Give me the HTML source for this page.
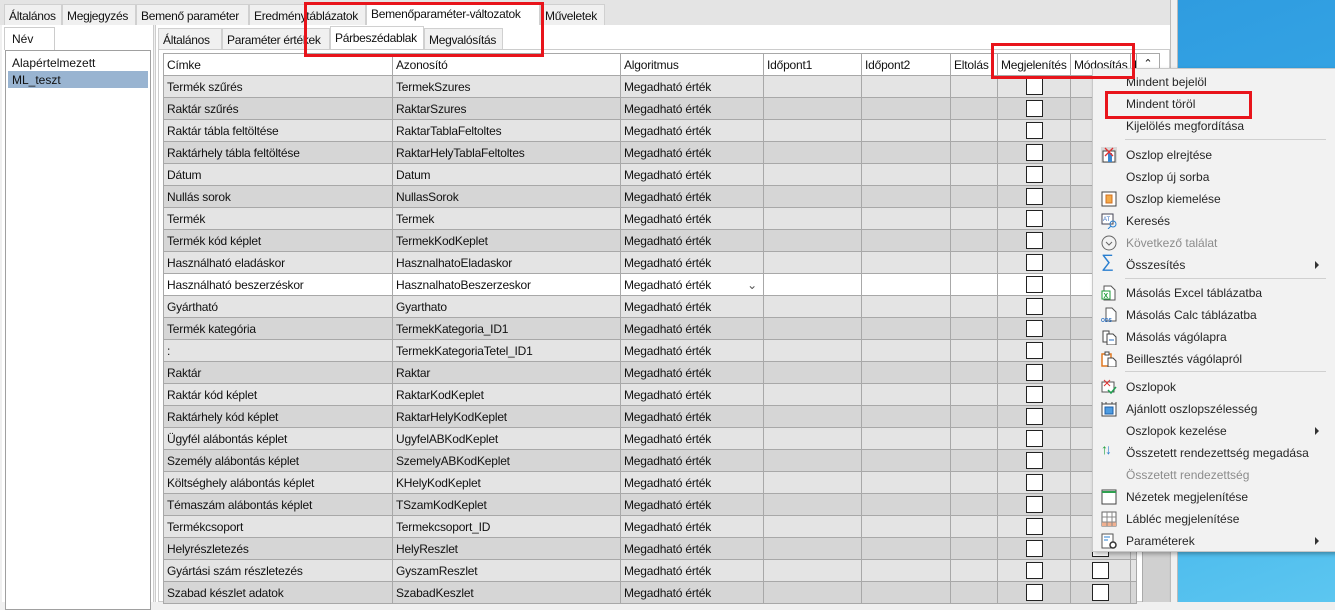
<!DOCTYPE html>
<html><head><meta charset="utf-8"><style>
*{box-sizing:border-box;margin:0;padding:0}
body{width:1335px;height:602px;overflow:hidden;position:relative;background:#f0f0f0;font-family:"Liberation Sans",sans-serif;font-size:12px;color:#111}
.a{position:absolute}
.desk{left:1178px;top:0;width:157px;height:602px;background:linear-gradient(160deg,#2f9ce0,#3cb0ea 60%,#5cc6f0)}
.tab,.stab{position:absolute;top:4px;height:21px;border:1px solid #d0d0d0;border-bottom:none;background:#f0f0f0;padding:4px 0 0 4px;white-space:nowrap;font-size:12px;letter-spacing:-0.3px;overflow:hidden}
.stab{top:28px}
table{position:absolute;left:163px;top:53px;border-collapse:collapse;table-layout:fixed;width:973px}
td{height:22px;border:1px solid #a8a8a8;padding:0 0 0 3px;white-space:nowrap;overflow:hidden;font-size:12px;letter-spacing:-0.2px}
tr.h td{background:#fff}
tr.l td{background:#e4e4e4}
tr.d td{background:#d6d6d6}
tr.w td{background:#fff}
.cb{display:inline-block;width:17px;height:17px;border:1px solid #222;background:#fff;vertical-align:middle}
td.c{text-align:center;padding:0}
.menu{left:1092px;top:68px;width:245px;height:484px;background:#f2f2f2;border:1px solid #c8c8c8;box-shadow:2px 2px 4px rgba(0,0,0,.3)}
.mi{position:absolute;left:33px;font-size:12px;color:#262626;height:22px;line-height:22px;white-space:nowrap}
.g{color:#8c8c8c}
.sep{position:absolute;left:32px;width:201px;height:1px;background:#d0d0d0}
.arr{position:absolute;left:222px;width:0;height:0;border-left:4px solid #333;border-top:4px solid transparent;border-bottom:4px solid transparent}
.ic{position:absolute;left:8px;width:16px;height:16px}
.red{position:absolute;border:3px solid #e8141b}
</style></head><body>
<div class="a desk"></div>
<div class="a" style="left:0;top:0;width:1178px;height:25px;background:#e4e4e4"></div>
<div class="tab" style="left:4px;width:58px">Általános</div>
<div class="tab" style="left:62px;width:74px">Megjegyzés</div>
<div class="tab" style="left:136px;width:113px">Bemenő paraméter</div>
<div class="tab" style="left:249px;width:117px">Eredménytáblázatok</div>
<div class="tab" style="left:366px;top:2px;height:24px;width:174px;background:#fff">Bemenőparaméter-változatok</div>
<div class="tab" style="left:540px;width:65px">Műveletek</div>
<!-- left panel -->
<div class="a" style="left:2px;top:25px;width:152px;height:577px;background:#fff;border-right:1px solid #ccc"></div>
<div class="a" style="left:4px;top:27px;width:51px;height:23px;background:#fff;border:1px solid #ccc;border-bottom:none;padding:4px 0 0 7px;font-size:12px">Név</div>
<div class="a" style="left:5px;top:50px;width:146px;height:560px;border:1px solid #a0a0a0;background:#fff"></div>
<div class="a" style="left:12px;top:56px;font-size:12px">Alapértelmezett</div>
<div class="a" style="left:8px;top:71px;width:140px;height:17px;background:#99b4d1"></div>
<div class="a" style="left:12px;top:73px;font-size:12px">ML_teszt</div>
<!-- right panel -->
<div class="a" style="left:155px;top:25px;width:1015px;height:577px;background:#fff;border-left:1px solid #ccc"></div>
<div class="stab" style="left:158px;width:64px">Általános</div>
<div class="stab" style="left:222px;width:108px">Paraméter értékek</div>
<div class="stab" style="left:330px;top:26px;height:24px;width:94px;background:#fff">Párbeszédablak</div>
<div class="stab" style="left:424px;width:79px">Megvalósítás</div>
<div class="a" style="left:158px;top:49px;width:1012px;height:553px;border:1px solid #ccc;background:#fff"></div>
<div class="a" style="left:1142px;top:75px;width:27px;height:527px;background:#d0d0d0;border-left:1px solid #aaa"></div>
<div class="a" style="left:1170px;top:0;width:8px;height:602px;background:#f0f0f0;border-left:1px solid #bbb;border-right:1px solid #bbb"></div>
<table>
<colgroup><col style="width:229px"><col style="width:228px"><col style="width:143px"><col style="width:98px"><col style="width:89px"><col style="width:47px"><col style="width:73px"><col style="width:60px"><col style="width:6px"></colgroup>
<tr class="h"><td>Címke</td><td>Azonosító</td><td>Algoritmus</td><td>Időpont1</td><td>Időpont2</td><td>Eltolás</td><td>Megjelenítés</td><td>Módosítás</td><td>K</td></tr>
<tr class="l"><td>Termék szűrés</td><td>TermekSzures</td><td>Megadható érték</td><td></td><td></td><td></td><td class="c"><span class="cb"></span></td><td class="c"><span class="cb"></span></td><td></td></tr>
<tr class="d"><td>Raktár szűrés</td><td>RaktarSzures</td><td>Megadható érték</td><td></td><td></td><td></td><td class="c"><span class="cb"></span></td><td class="c"><span class="cb"></span></td><td></td></tr>
<tr class="l"><td>Raktár tábla feltöltése</td><td>RaktarTablaFeltoltes</td><td>Megadható érték</td><td></td><td></td><td></td><td class="c"><span class="cb"></span></td><td class="c"><span class="cb"></span></td><td></td></tr>
<tr class="d"><td>Raktárhely tábla feltöltése</td><td>RaktarHelyTablaFeltoltes</td><td>Megadható érték</td><td></td><td></td><td></td><td class="c"><span class="cb"></span></td><td class="c"><span class="cb"></span></td><td></td></tr>
<tr class="l"><td>Dátum</td><td>Datum</td><td>Megadható érték</td><td></td><td></td><td></td><td class="c"><span class="cb"></span></td><td class="c"><span class="cb"></span></td><td></td></tr>
<tr class="d"><td>Nullás sorok</td><td>NullasSorok</td><td>Megadható érték</td><td></td><td></td><td></td><td class="c"><span class="cb"></span></td><td class="c"><span class="cb"></span></td><td></td></tr>
<tr class="l"><td>Termék</td><td>Termek</td><td>Megadható érték</td><td></td><td></td><td></td><td class="c"><span class="cb"></span></td><td class="c"><span class="cb"></span></td><td></td></tr>
<tr class="d"><td>Termék kód képlet</td><td>TermekKodKeplet</td><td>Megadható érték</td><td></td><td></td><td></td><td class="c"><span class="cb"></span></td><td class="c"><span class="cb"></span></td><td></td></tr>
<tr class="l"><td>Használható eladáskor</td><td>HasznalhatoEladaskor</td><td>Megadható érték</td><td></td><td></td><td></td><td class="c"><span class="cb"></span></td><td class="c"><span class="cb"></span></td><td></td></tr>
<tr class="w"><td>Használható beszerzéskor</td><td>HasznalhatoBeszerzeskor</td><td>Megadható érték<span style="float:right;margin-right:6px;color:#555">&#8964;</span></td><td></td><td></td><td></td><td class="c"><span class="cb"></span></td><td class="c"><span class="cb"></span></td><td></td></tr>
<tr class="l"><td>Gyártható</td><td>Gyarthato</td><td>Megadható érték</td><td></td><td></td><td></td><td class="c"><span class="cb"></span></td><td class="c"><span class="cb"></span></td><td></td></tr>
<tr class="d"><td>Termék kategória</td><td>TermekKategoria_ID1</td><td>Megadható érték</td><td></td><td></td><td></td><td class="c"><span class="cb"></span></td><td class="c"><span class="cb"></span></td><td></td></tr>
<tr class="l"><td>:</td><td>TermekKategoriaTetel_ID1</td><td>Megadható érték</td><td></td><td></td><td></td><td class="c"><span class="cb"></span></td><td class="c"><span class="cb"></span></td><td></td></tr>
<tr class="d"><td>Raktár</td><td>Raktar</td><td>Megadható érték</td><td></td><td></td><td></td><td class="c"><span class="cb"></span></td><td class="c"><span class="cb"></span></td><td></td></tr>
<tr class="l"><td>Raktár kód képlet</td><td>RaktarKodKeplet</td><td>Megadható érték</td><td></td><td></td><td></td><td class="c"><span class="cb"></span></td><td class="c"><span class="cb"></span></td><td></td></tr>
<tr class="d"><td>Raktárhely kód képlet</td><td>RaktarHelyKodKeplet</td><td>Megadható érték</td><td></td><td></td><td></td><td class="c"><span class="cb"></span></td><td class="c"><span class="cb"></span></td><td></td></tr>
<tr class="l"><td>Ügyfél alábontás képlet</td><td>UgyfelABKodKeplet</td><td>Megadható érték</td><td></td><td></td><td></td><td class="c"><span class="cb"></span></td><td class="c"><span class="cb"></span></td><td></td></tr>
<tr class="d"><td>Személy alábontás képlet</td><td>SzemelyABKodKeplet</td><td>Megadható érték</td><td></td><td></td><td></td><td class="c"><span class="cb"></span></td><td class="c"><span class="cb"></span></td><td></td></tr>
<tr class="l"><td>Költséghely alábontás képlet</td><td>KHelyKodKeplet</td><td>Megadható érték</td><td></td><td></td><td></td><td class="c"><span class="cb"></span></td><td class="c"><span class="cb"></span></td><td></td></tr>
<tr class="d"><td>Témaszám alábontás képlet</td><td>TSzamKodKeplet</td><td>Megadható érték</td><td></td><td></td><td></td><td class="c"><span class="cb"></span></td><td class="c"><span class="cb"></span></td><td></td></tr>
<tr class="l"><td>Termékcsoport</td><td>Termekcsoport_ID</td><td>Megadható érték</td><td></td><td></td><td></td><td class="c"><span class="cb"></span></td><td class="c"><span class="cb"></span></td><td></td></tr>
<tr class="d"><td>Helyrészletezés</td><td>HelyReszlet</td><td>Megadható érték</td><td></td><td></td><td></td><td class="c"><span class="cb"></span></td><td class="c"><span class="cb"></span></td><td></td></tr>
<tr class="l"><td>Gyártási szám részletezés</td><td>GyszamReszlet</td><td>Megadható érték</td><td></td><td></td><td></td><td class="c"><span class="cb"></span></td><td class="c"><span class="cb"></span></td><td></td></tr>
<tr class="d"><td>Szabad készlet adatok</td><td>SzabadKeszlet</td><td>Megadható érték</td><td></td><td></td><td></td><td class="c"><span class="cb"></span></td><td class="c"><span class="cb"></span></td><td></td></tr>
</table>
<div class="a" style="left:1136px;top:53px;width:24px;height:22px;background:#fff;border:1px solid #a8a8a8;text-align:center;font-size:11px;line-height:20px">&#8963;</div>
<!-- context menu -->
<div class="a menu">
<div class="mi" style="top:2px">Mindent bejelöl</div>
<div class="mi" style="top:24px">Mindent töröl</div>
<div class="mi" style="top:46px">Kijelölés megfordítása</div>
<div class="sep" style="top:70px"></div>
<svg class="ic" style="top:78px" viewBox="0 0 16 16"><rect x="0" y="0" width="16" height="16" fill="#d8d8d8"/><rect x="2" y="4" width="12" height="11" fill="#fff" stroke="#444"/><rect x="7" y="6" width="4" height="9" fill="#3a86d0"/><path d="M4 1l8 8M12 1l-8 8" stroke="#e03030" stroke-width="1.3"/></svg>
<div class="mi" style="top:75px">Oszlop elrejtése</div>
<div class="mi" style="top:97px">Oszlop új sorba</div>
<svg class="ic" style="top:122px" viewBox="0 0 16 16"><rect x="1" y="1" width="14" height="14" fill="#fff" stroke="#444"/><rect x="5" y="4" width="6" height="8" fill="#f3a948" stroke="#d07020"/></svg>
<div class="mi" style="top:119px">Oszlop kiemelése</div>
<svg class="ic" style="top:144px" viewBox="0 0 16 16"><rect x="1" y="1" width="11" height="10" fill="#fff" stroke="#445"/><text x="2" y="8" font-size="6" fill="#3a6fc0" font-family="Liberation Sans">AT</text><circle cx="12" cy="11" r="3" fill="none" stroke="#2a80d0"/><path d="M10 13l-3 3" stroke="#2a80d0"/></svg>
<div class="mi" style="top:141px">Keresés</div>
<svg class="ic" style="top:166px" viewBox="0 0 16 16"><circle cx="8" cy="8" r="7" fill="none" stroke="#666"/><path d="M5 7l3 3 3-3" fill="none" stroke="#666"/></svg>
<div class="mi g" style="top:163px">Következő találat</div>
<div class="ic" style="top:184px;font-size:18px;color:#2a7fd0;line-height:16px">&sum;</div>
<div class="mi" style="top:185px">Összesítés</div><div class="arr" style="top:192px"></div>
<div class="sep" style="top:209px"></div>
<svg class="ic" style="top:216px" viewBox="0 0 16 16"><path d="M3 1h7l4 4v10H3z" fill="#fff" stroke="#555"/><rect x="1" y="6" width="8" height="8" fill="#fff" stroke="#1e9e3a"/><text x="2.5" y="13" font-size="7" fill="#1e9e3a" font-family="Liberation Sans" font-weight="bold">X</text></svg>
<div class="mi" style="top:213px">Másolás Excel táblázatba</div>
<svg class="ic" style="top:238px" viewBox="0 0 16 16"><path d="M5 1h6l4 4v9H5z" fill="#fff" stroke="#555"/><text x="0" y="15" font-size="5" fill="#2a6fc0" font-family="Liberation Sans" font-weight="bold">ODS</text></svg>
<div class="mi" style="top:235px">Másolás Calc táblázatba</div>
<svg class="ic" style="top:260px" viewBox="0 0 16 16"><path d="M2 2h6v11H2z" fill="#fff" stroke="#444"/><path d="M6 5h6l3 3v8H6z" fill="#fff" stroke="#444"/><path d="M8 11h5" stroke="#2a6fc0"/></svg>
<div class="mi" style="top:257px">Másolás vágólapra</div>
<svg class="ic" style="top:282px" viewBox="0 0 16 16"><path d="M1 3h9v12H1z" fill="#fff" stroke="#e07820" stroke-width="1.5"/><rect x="4" y="1" width="4" height="3" fill="#fff" stroke="#444"/><path d="M7 7h5l3 3v6H7z" fill="#fff" stroke="#444"/></svg>
<div class="mi" style="top:279px">Beillesztés vágólapról</div>
<div class="sep" style="top:302px"></div>
<svg class="ic" style="top:310px" viewBox="0 0 16 16"><rect x="1" y="3" width="12" height="10" fill="#fff" stroke="#555"/><path d="M3 1l6 6M9 1l-6 6" stroke="#e03030"/><path d="M7 11l3 3 5-6" fill="none" stroke="#20a050" stroke-width="1.5"/></svg>
<div class="mi" style="top:307px">Oszlopok</div>
<svg class="ic" style="top:332px" viewBox="0 0 16 16"><rect x="1" y="3" width="14" height="12" fill="#fff" stroke="#444"/><rect x="4" y="6" width="8" height="7" fill="#4d9be0" stroke="#1d5fa8"/><path d="M1 1v2M15 1v2M5 1v2M11 1v2" stroke="#444"/></svg>
<div class="mi" style="top:329px">Ajánlott oszlopszélesség</div>
<div class="mi" style="top:351px">Oszlopok kezelése</div><div class="arr" style="top:358px"></div>
<div class="ic" style="top:372px;font-size:14px;line-height:16px"><span style="color:#20a040">&#8593;</span><span style="color:#2a7fd0;margin-left:-3px">&#8595;</span></div>
<div class="mi" style="top:373px">Összetett rendezettség megadása</div>
<div class="mi g" style="top:395px">Összetett rendezettség</div>
<svg class="ic" style="top:420px" viewBox="0 0 16 16"><rect x="1" y="1" width="14" height="14" fill="#fff" stroke="#444"/><path d="M1 3h14" stroke="#2fa050" stroke-width="2"/></svg>
<div class="mi" style="top:417px">Nézetek megjelenítése</div>
<svg class="ic" style="top:442px" viewBox="0 0 16 16"><rect x="1" y="1" width="14" height="14" fill="#fff" stroke="#666"/><rect x="1" y="11" width="14" height="4" fill="#f0b090"/><path d="M1 6h14M1 11h14M6 1v14M11 1v14" stroke="#888"/></svg>
<div class="mi" style="top:439px">Lábléc megjelenítése</div>
<svg class="ic" style="top:464px" viewBox="0 0 16 16"><rect x="1" y="1" width="11" height="14" fill="#fff" stroke="#555"/><path d="M3 4h6M3 7h4" stroke="#2a7fd0"/><circle cx="12" cy="12" r="3" fill="#fff" stroke="#333" stroke-width="1.5"/></svg>
<div class="mi" style="top:461px">Paraméterek</div><div class="arr" style="top:468px"></div>
</div>
<!-- red highlight boxes -->
<div class="red" style="left:304px;top:2px;width:240px;height:55px"></div>
<div class="red" style="left:991px;top:43px;width:144px;height:36px"></div>
<div class="red" style="left:1105px;top:91px;width:147px;height:28px"></div>
</body></html>
